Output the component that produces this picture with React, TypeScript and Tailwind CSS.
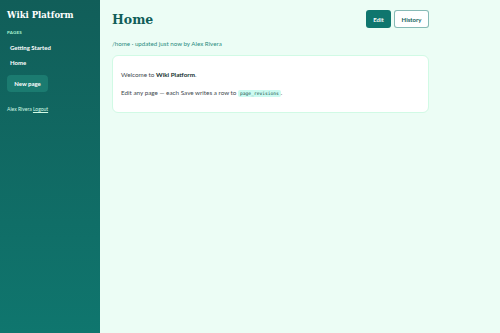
export default function App() {
  return (
    <div className="flex h-[333px] w-[500px] font-['Lato',sans-serif]">
      <Sidebar />
      <main className="flex-1 bg-[#ecfdf5] pl-3 pr-[71px] pt-[10px]">
        <div className="flex items-start justify-between">
          <h1 className="mt-[2px] font-['DejaVu_Serif',serif] text-[12.5px] font-bold leading-[16px] text-[#115e59]">
            Home
          </h1>
          <div className="flex gap-[3px]">
            <button
              type="button"
              className="h-[18px] w-[25px] rounded-[3px] bg-[#0f766e] text-[6px] font-bold text-white"
            >
              Edit
            </button>
            <button
              type="button"
              className="h-[18px] w-[35px] rounded-[3px] border border-[#0f766e]/50 bg-white text-[6px] font-bold text-[#115e59]"
            >
              History
            </button>
          </div>
        </div>
        <p className="mt-[11px] text-[6.2px] leading-[9px] text-[#2a8c7f]">/home · updated just now by Alex Rivera</p>
        <div className="mt-[7px] rounded-[6px] border border-[#d1fae5] bg-white px-2 pb-[14px] pt-[14px] text-[6.3px] leading-[9px] text-[#3f4a4f]">
          <p>
            Welcome to <b className="text-[#12302d]">Wiki Platform</b>.
          </p>
          <p className="mt-[9px]">
            Edit any page — each Save writes a row to{' '}
            <code className="rounded-[2px] bg-[#ccfbf1] px-[2px] py-[1px] font-['DejaVu_Sans_Mono',monospace] text-[4.6px] text-[#134e4a]">
              page_revisions
            </code>
            .
          </p>
        </div>
      </main>
    </div>
  );
}

function Sidebar() {
  return (
    <aside className="flex w-[100px] flex-col bg-gradient-to-b from-[#115e59] to-[#0f766e] px-[7px] pt-[10px] text-white">
      <p className="font-['DejaVu_Serif',serif] text-[8.5px] font-bold leading-[11px]">Wiki Platform</p>
      <p className="mt-[9px] text-[4.5px] font-bold uppercase tracking-wider text-[#a7f3d0]">Pages</p>
      <nav className="mt-[6px] flex flex-col gap-[6px] pl-[3px] text-[6px] font-bold">
        <a>Getting Started</a>
        <a>Home</a>
      </nav>
      <button
        type="button"
        className="mt-[8px] h-[17px] w-[41px] rounded-[4px] bg-[#1b7b70] text-[6px] font-bold text-white"
      >
        New page
      </button>
      <p className="mt-[14px] text-[5px] text-[#d1fae5]">
        Alex Rivera <span className="underline">Logout</span>
      </p>
    </aside>
  );
}
